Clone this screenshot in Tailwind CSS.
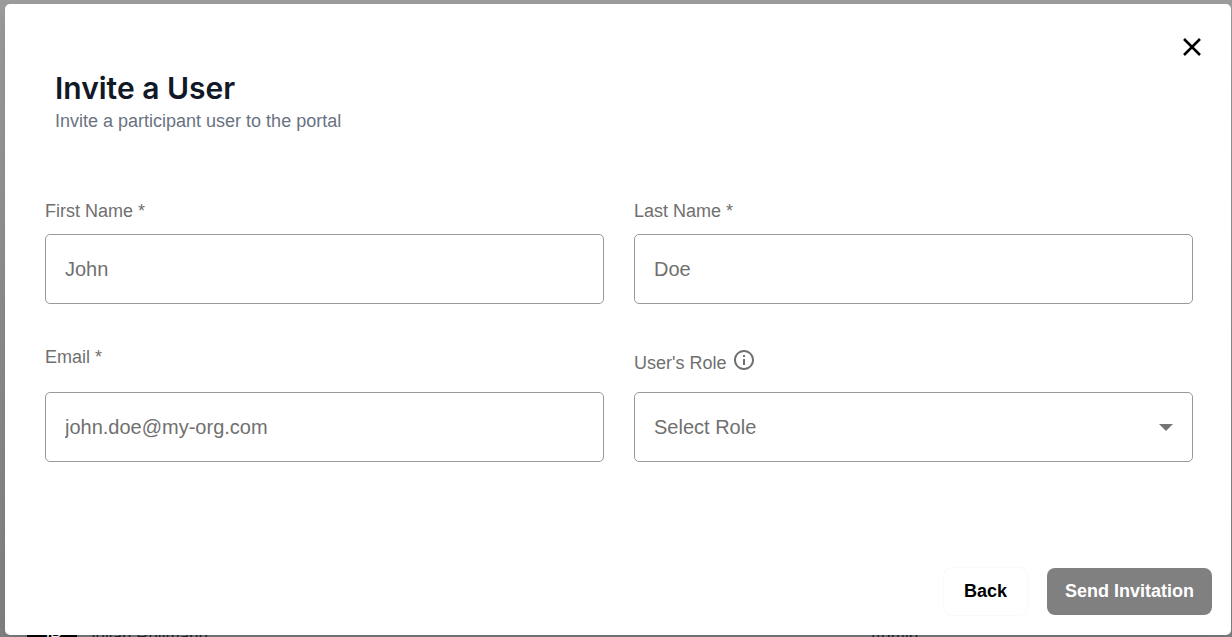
<!DOCTYPE html>
<html lang="en">
<head>
<meta charset="utf-8">
<meta name="viewport" content="width=device-width, initial-scale=1">
<title>Invite a User</title>
<script src="https://cdn.jsdelivr.net/npm/@tailwindcss/browser@4"></script>
</head>
<body class="relative flex h-screen flex-col overflow-hidden bg-linear-to-b from-[#9b9b9b] via-[#8b8b8b] to-[#808080] pt-1 pr-px pb-0.5 pl-[5px] font-['Liberation_Sans',Arial,sans-serif]">
  <!-- Member row behind the dialog -->
  <div class="absolute inset-x-0 -bottom-3 flex h-6 items-start text-[17px] leading-6 text-[#252530]" aria-hidden="true">
    <span class="ml-[27px] h-6 w-[50px] bg-black text-center text-white">JR</span>
    <span class="ml-2.5 flex-1">Julian Rullmann</span>
    <span class="w-[362px]">Admin</span>
  </div>

  <main role="dialog" aria-labelledby="title" class="relative flex flex-1 flex-col rounded-[5px] bg-white shadow-lg">
    <button type="button" aria-label="Close" class="absolute top-[31px] right-[27px] size-6 text-black">
      <svg viewBox="0 0 24 24" class="size-6" fill="none" stroke="currentColor" stroke-width="2.5"><path d="M4 4 20 20M20 4 4 20"/></svg>
    </button>

    <header class="px-[50px] pt-[66px]">
      <h1 id="title" class="font-[Inter,sans-serif] text-3xl leading-9 font-semibold text-[#111827]">Invite a User</h1>
      <p class="text-lg leading-[30px] text-gray-500">Invite a participant user to the portal</p>
    </header>

    <form class="flex flex-1 flex-col text-[#6f6f6f]">
      <div class="mt-[66px] mr-[38px] ml-10 grid grid-cols-2 gap-x-[30px] gap-y-10">
        <div>
          <label for="first" class="block h-8 text-lg leading-[18px]">First Name *</label>
          <input id="first" type="text" placeholder="John" class="block h-[70px] w-full rounded-[5px] border border-[#999] px-[19px] text-xl placeholder:text-[#707070]">
        </div>
        <div>
          <label for="last" class="block h-8 text-lg leading-[18px]">Last Name *</label>
          <input id="last" type="text" placeholder="Doe" class="block h-[70px] w-full rounded-[5px] border border-[#999] px-[19px] text-xl placeholder:text-[#707070]">
        </div>
        <div>
          <label for="email" class="block h-12 pt-1 text-lg leading-[18px]">Email *</label>
          <input id="email" type="email" placeholder="john.doe@my-org.com" class="block h-[70px] w-full rounded-[5px] border border-[#999] px-[19px] text-xl placeholder:text-[#707070]">
        </div>
        <div>
          <div class="flex h-12 items-start gap-1.5">
            <label for="role" class="pt-2.5 text-lg leading-[18px]">User's Role</label>
            <svg viewBox="0 0 24 24" class="mt-1 size-6" fill="currentColor" aria-hidden="true"><path d="M11 7h2v2h-2zm0 4h2v6h-2zm1-9C6.480 2 2 6.480 2 12s4.480 10 10 10 10-4.480 10-10S17.520 2 12 2zm0 18c-4.410 0-8-3.590-8-8s3.590-8 8-8 8 3.590 8 8-3.590 8-8 8z"/></svg>
          </div>
          <div class="relative">
            <select id="role" class="block h-[70px] w-full appearance-none rounded-[5px] border border-[#999] px-[19px] text-xl text-[#707070]">
              <option>Select Role</option>
            </select>
            <svg viewBox="0 0 14 7" class="pointer-events-none absolute top-8 right-5 h-[7px] w-3.5" fill="#757575" aria-hidden="true"><path d="M0 0h14L7 7z"/></svg>
          </div>
        </div>
      </div>
      <div class="mt-auto flex justify-end gap-5 pr-[19px] pb-5 text-lg font-bold">
        <button type="button" class="h-[47px] rounded-lg bg-white px-5 pb-0.5 text-black shadow-[0_0_2px_rgba(0,0,0,0.08)]">Back</button>
        <button type="submit" disabled class="h-[47px] rounded-lg bg-[#808080] px-[18px] pb-0.5 text-white">Send Invitation</button>
      </div>
    </form>
  </main>
</body>
</html>
